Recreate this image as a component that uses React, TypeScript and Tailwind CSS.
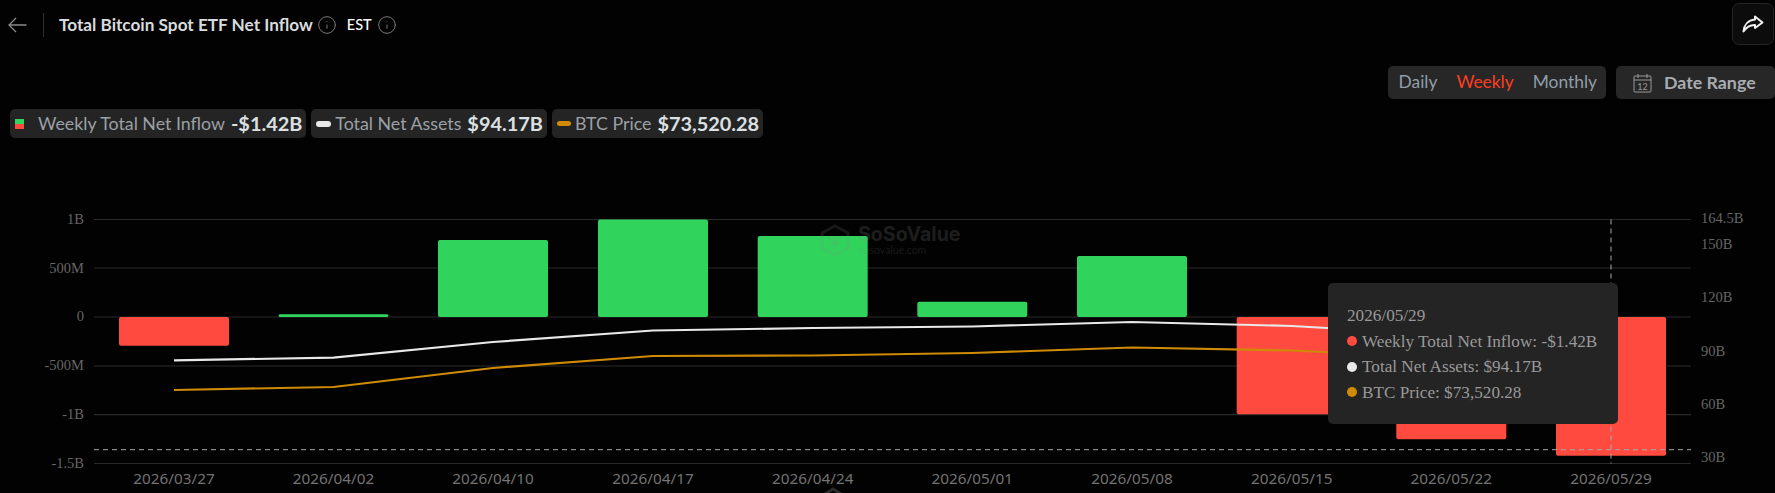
import { Info } from 'lucide-react';

const plotLeft = 94;
const plotRight = 1691;
const zeroY = 317;

const gridLines = [219.5, 268, 317, 366, 414.7, 463.5];

const leftLabels = [
  { y: 219, text: '1B' },
  { y: 268, text: '500M' },
  { y: 316, text: '0' },
  { y: 365, text: '-500M' },
  { y: 414, text: '-1B' },
  { y: 463, text: '-1.5B' },
];

const rightLabels = [
  { y: 218, text: '164.5B' },
  { y: 243.5, text: '150B' },
  { y: 296.5, text: '120B' },
  { y: 350.5, text: '90B' },
  { y: 404, text: '60B' },
  { y: 457, text: '30B' },
];

const bars = [
  { date: '2026/03/27', center: 174, end: 345.7 },
  { date: '2026/04/02', center: 333.5, end: 314.3 },
  { date: '2026/04/10', center: 493, end: 240 },
  { date: '2026/04/17', center: 653, end: 219.5 },
  { date: '2026/04/24', center: 812.7, end: 236 },
  { date: '2026/05/01', center: 972.3, end: 301.7 },
  { date: '2026/05/08', center: 1132, end: 256 },
  { date: '2026/05/15', center: 1291.7, end: 414.3 },
  { date: '2026/05/22', center: 1451.3, end: 439.3 },
  { date: '2026/05/29', center: 1611, end: 455.7 },
];

const assetsLine =
  '174,360.3 333.5,357.7 493,342 653,330.5 812.7,328 972.3,326.5 1132,322 1291.7,326 1451.3,335 1611,345';
const priceLine =
  '174,390 333.5,387 493,368 653,356 812.7,355.5 972.3,353 1132,347.5 1291.7,350.5 1451.3,358 1611,365';

function Chart() {
  return (
    <svg width="1775" height="493" viewBox="0 0 1775 493" className="block">
      {gridLines.map((y) => (
        <line key={y} x1={plotLeft} x2={plotRight} y1={y} y2={y} stroke="#2a2a2a" strokeWidth="1.2" />
      ))}
      {bars.map((bar) => {
        const top = Math.min(zeroY, bar.end);
        const height = Math.abs(bar.end - zeroY);
        return (
          <rect
            key={bar.date}
            x={bar.center - 55}
            y={top}
            width="110"
            height={height}
            rx="2"
            fill={bar.end < zeroY ? '#30d35c' : '#ff4a3f'}
          />
        );
      })}
      <polyline points={assetsLine} fill="none" stroke="#e8e8e8" strokeWidth="2.2" />
      <polyline points={priceLine} fill="none" stroke="#cf8a06" strokeWidth="2.2" />
      {/* watermark sits faintly over the bars */}
      <g opacity="0.16" stroke="#8a8a8a" fill="none" strokeWidth="3">
        <path d="M835 226 L848 233 L848 248 L835 255 L822 248 L822 233 Z" />
        <path d="M827 238 L843 238 M835 238 L835 250 M829 243 L841 243" strokeWidth="2.5" />
      </g>
      <text x="858" y="241" opacity="0.2" fontFamily="Inter, sans-serif" fontWeight="700" fontSize="19.6" fill="#8a8a8a">
        SoSoValue
      </text>
      <text x="859" y="254" opacity="0.16" fontFamily="Lato, sans-serif" fontSize="10.5" fill="#8a8a8a">
        sosovalue.com
      </text>
      {leftLabels.map((l) => (
        <text key={l.text} x="84" y={l.y + 5} textAnchor="end" fontFamily="'Liberation Serif', serif" fontSize="14.5" fill="#666666">
          {l.text}
        </text>
      ))}
      {rightLabels.map((l) => (
        <text key={l.text} x="1701" y={l.y + 5} fontFamily="'Liberation Serif', serif" fontSize="14.5" fill="#666666">
          {l.text}
        </text>
      ))}
      {bars.map((bar) => (
        <text key={bar.date} x={bar.center} y="484" textAnchor="middle" fontFamily="'Noto Sans', sans-serif" fontSize="15.3" fill="#737373">
          {bar.date}
        </text>
      ))}
      <line x1={plotLeft} x2={plotRight} y1="449.7" y2="449.7" stroke="#a8a8a8" strokeWidth="1" strokeDasharray="5 4" />
      <line x1="1611" x2="1611" y1="219.5" y2="463.5" stroke="#a8a8a8" strokeWidth="1" strokeDasharray="5 4" />
      {/* bottom logo cut off by the page edge */}
      <path d="M820 497 L833 489 L846 497" fill="none" stroke="#2a2a2a" strokeWidth="3" />
    </svg>
  );
}

function Dot({ color }: { color: string }) {
  return <span className={`w-[10px] h-[10px] rounded-full mr-[5px] ${color}`} />;
}

function Tooltip() {
  return (
    <div className="absolute left-[1328px] top-[283px] w-[290px] h-[141px] bg-[#242424] rounded-[5px] pl-[19px] pt-[20px] font-['Liberation_Serif',serif] text-[17.2px] leading-[25.5px] text-[#999999]">
      <div>2026/05/29</div>
      <div className="flex items-center">
        <Dot color="bg-[#ff4a3f]" />
        <span>Weekly Total Net Inflow: -$1.42B</span>
      </div>
      <div className="flex items-center">
        <Dot color="bg-[#e8e8e8]" />
        <span>Total Net Assets: $94.17B</span>
      </div>
      <div className="flex items-center">
        <Dot color="bg-[#cf8a06]" />
        <span>BTC Price: $73,520.28</span>
      </div>
    </div>
  );
}

function LegendChip({ marker, label, value }: { marker: React.ReactNode; label: string; value: string }) {
  return (
    <div className="flex items-center h-[29px] rounded-[5px] bg-[#242424] pl-[5px] pr-[4px] text-[#9ba0a5]">
      {marker}
      <span className="text-[17.8px]">{label}</span>
      <span className="ml-[6px] text-[19.9px] font-bold text-[#dde0e3]">{value}</span>
    </div>
  );
}

export default function App() {
  return (
    <div className="relative w-[1775px] h-[493px] overflow-hidden bg-[#020202] font-['Lato',sans-serif]">
      <div className="absolute inset-0">
        <Chart />
      </div>

      <div className="relative flex flex-col">
        <div className="flex items-start h-[66px]">
          <div className="flex items-center h-[50px] pl-[8px]">
            <svg width="19" height="16" viewBox="0 0 19 16" fill="none" stroke="#8a8a8a" strokeWidth="1.3">
              <path d="M18.5 8H1M8 1L1 8l7 7" />
            </svg>
            <div className="w-px h-[24px] bg-[#303030] ml-[16px] mr-[15px]" />
            <span className="text-[17.2px] font-bold text-[#d8dbde]">Total Bitcoin Spot ETF Net Inflow</span>
            <Info size={20} strokeWidth={1.2} className="ml-[4px] text-[#777777]" />
            <span className="ml-[10px] text-[14.5px] font-medium text-white">EST</span>
            <Info size={20} strokeWidth={1.2} className="ml-[5px] text-[#777777]" />
          </div>
          <div className="ml-auto mr-px mt-[3px] flex items-center justify-center w-[42px] h-[42px] rounded-[7px] border border-[#242424] bg-[#0c0c0c]">
            <svg width="22" height="18" viewBox="0 0 22 18" fill="none" stroke="#f0f0f0" strokeWidth="2" strokeLinejoin="round">
              <path d="M13 1.5 L20.5 7.5 L13 13 V10 C8 9.8 4.5 12 1.5 16.5 C2 10 6 5.2 13 4.6 Z" />
            </svg>
          </div>
        </div>

        <div className="flex justify-end gap-[10px] h-[33px]">
          <div className="flex items-center gap-[19px] rounded-[5px] bg-[#272727] pl-[10px] pr-[9px] text-[17.4px] text-[#929da8]">
            <span>Daily</span>
            <span className="text-[#ff3d1f]">Weekly</span>
            <span>Monthly</span>
          </div>
          <div className="flex items-center w-[159px] rounded-[5px] bg-[#272727] pl-[17px]">
            <svg width="19" height="20" viewBox="0 0 19 20" fill="none" stroke="#9a9a9a" strokeWidth="1">
              <rect x="1" y="3" width="17" height="16" rx="1" />
              <path d="M1 7h17M5 1v4M14 1v4" />
              <text x="9.5" y="16.5" textAnchor="middle" fontSize="9" fill="#9a9a9a" stroke="none" fontFamily="Lato, sans-serif">
                12
              </text>
            </svg>
            <span className="ml-[12px] text-[17.8px] font-bold text-[#a8acb0]">Date Range</span>
          </div>
        </div>

        <div className="flex gap-[5px] ml-[10px] mt-[10px]">
          <LegendChip
            marker={
              <span className="flex flex-col w-[9px] mr-[14px]">
                <span className="h-[5px] bg-[#30d35c]" />
                <span className="h-[5px] bg-[#ff4a3f]" />
              </span>
            }
            label="Weekly Total Net Inflow"
            value="-$1.42B"
          />
          <LegendChip
            marker={<span className="w-[15px] h-[6px] rounded-full bg-[#e8e8e8] mr-[4px]" />}
            label="Total Net Assets"
            value="$94.17B"
          />
          <LegendChip
            marker={<span className="w-[14px] h-[5px] rounded-full bg-[#cf8a06] mr-[4px]" />}
            label="BTC Price"
            value="$73,520.28"
          />
        </div>
      </div>

      <Tooltip />
    </div>
  );
}
